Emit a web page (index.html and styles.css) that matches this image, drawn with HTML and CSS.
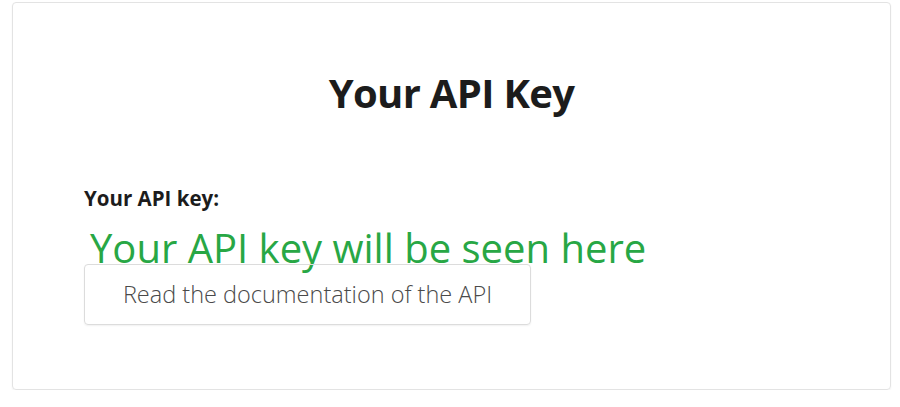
FILE: index.html
```html
<!DOCTYPE html>
<html lang="en">
<head>
<meta charset="utf-8">
<title>Your API Key</title>
<link rel="stylesheet" href="styles.css">
</head>
<body>
<main class="card">
  <h1 class="card-title">Your API Key</h1>
  <section class="key-section">
    <label class="key-label">Your API key:</label>
    <p class="key-value">Your API key will be seen here</p>
    <a class="doc-button" href="#">Read the documentation of the API</a>
  </section>
</main>
</body>
</html>
```

FILE: styles.css
```css
html, body {
  margin: 0;
  padding: 0;
  background: #ffffff;
}

body {
  font-family: "Open Sans", "Noto Sans", sans-serif;
  color: #212529;
  padding: 2px 9px 0 12px;
}

.card {
  box-sizing: border-box;
  height: 388px;
  border: 1px solid #e3e3e3;
  border-radius: 4px;
  box-shadow: 0 1px 2px rgba(0, 0, 0, 0.05);
  padding: 66px 71px 0 71px;
  display: flex;
  flex-direction: column;
}

.card-title {
  margin: 0;
  font-size: 40px;
  line-height: 48px;
  font-weight: 700;
  letter-spacing: -0.7px;
  text-align: center;
  color: #1c1c1c;
}

.key-section {
  margin-top: 69px;
  display: flex;
  flex-direction: column;
  align-items: flex-start;
}

.key-label {
  font-size: 20.5px;
  line-height: 24.6px;
  font-weight: 700;
  color: #1c1c1c;
}

.key-value {
  margin: 17px 0 0 6px;
  font-size: 40px;
  line-height: 1;
  font-weight: 400;
  color: #28a745;
}

.doc-button {
  box-sizing: border-box;
  width: 447px;
  height: 61px;
  margin-top: -4px;
  display: flex;
  align-items: center;
  justify-content: center;
  border: 1px solid #dcdcdc;
  border-radius: 4px;
  box-shadow: 0 1px 2px rgba(0, 0, 0, 0.06);
  background: transparent;
  color: #4a4a4a;
  font-size: 23.5px;
  font-weight: 300;
  text-decoration: none;
}
```
